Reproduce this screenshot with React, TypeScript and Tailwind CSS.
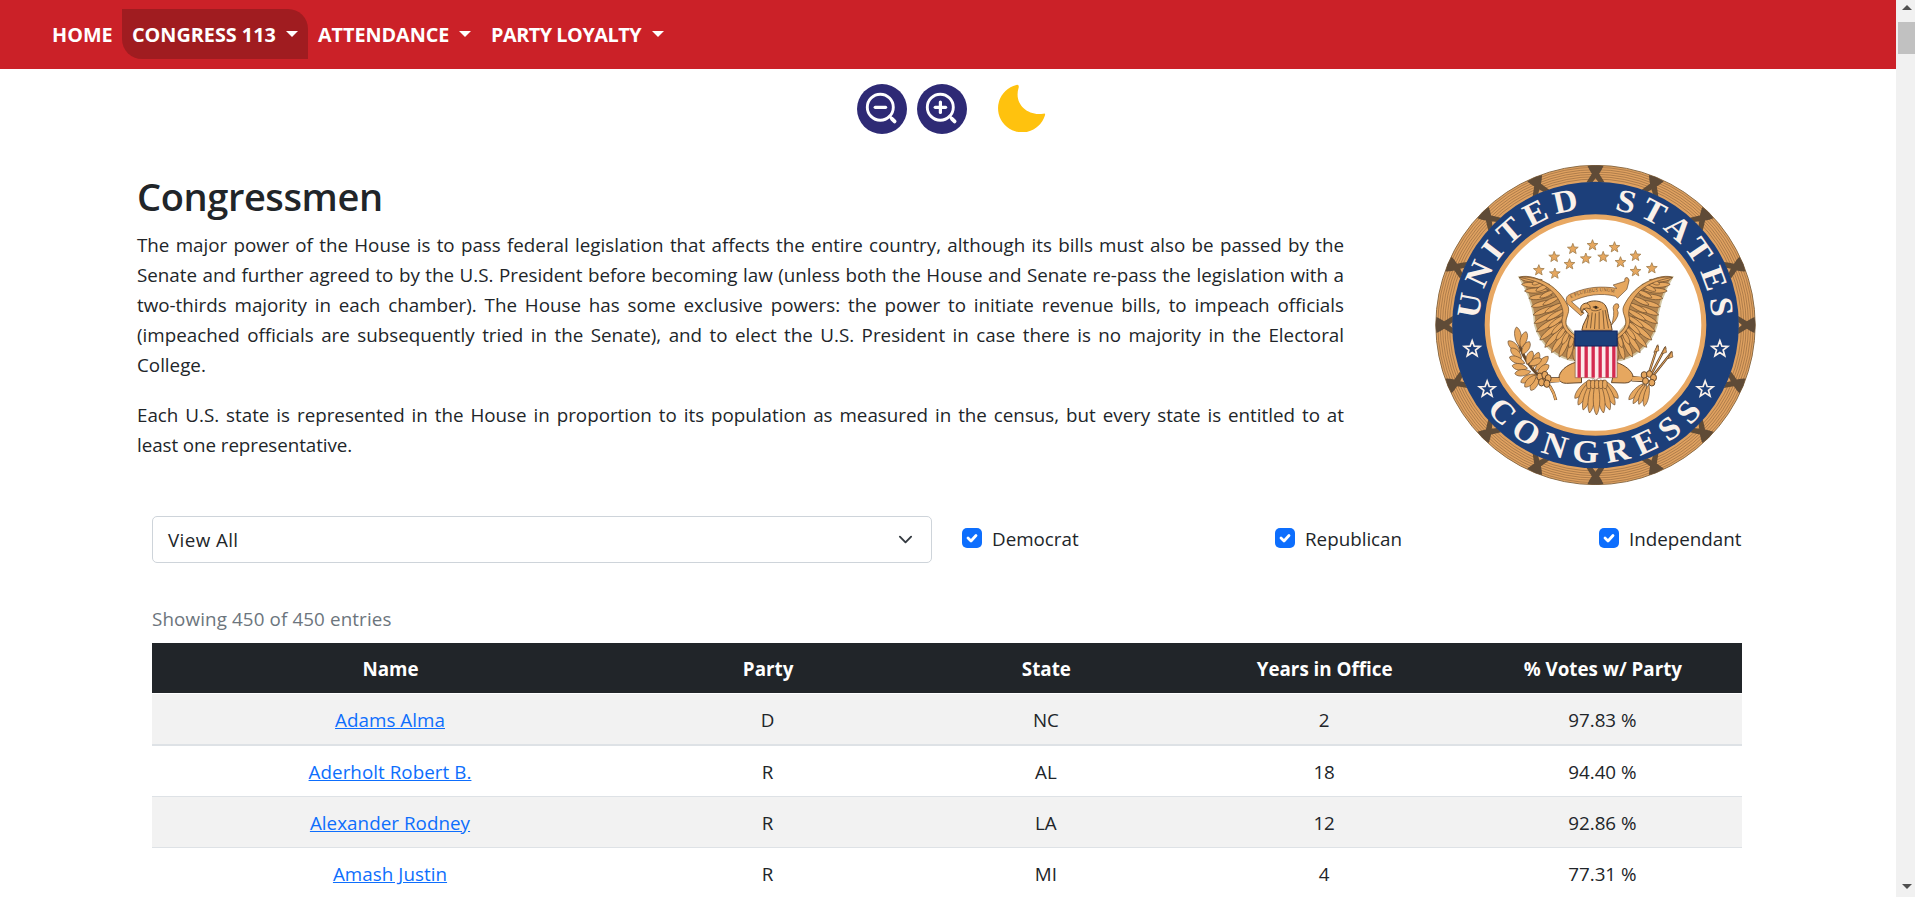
import React from 'react';

type Point = [number, number];

const GOLD = '#e6a75f';
const BROWN = '#66492c';

function leafPath([x1, y1]: Point, [x2, y2]: Point, width: number): string {
  const dx = x2 - x1;
  const dy = y2 - y1;
  const len = Math.hypot(dx, dy) || 1;
  const nx = (-dy / len) * width;
  const ny = (dx / len) * width;
  const ax = x1 + dx * 0.3;
  const ay = y1 + dy * 0.3;
  const bx = x1 + dx * 0.85;
  const by = y1 + dy * 0.85;
  return `M${x1} ${y1}C${ax + nx} ${ay + ny} ${bx + nx} ${by + ny} ${x2} ${y2}C${bx - nx} ${by - ny} ${ax - nx} ${ay - ny} ${x1} ${y1}Z`;
}

function starPoints(cx: number, cy: number, r: number, inner = 0.4): string {
  return Array.from({ length: 10 }, (_, i) => {
    const a = (Math.PI / 5) * i - Math.PI / 2;
    const q = i % 2 ? r * inner : r;
    return `${cx + q * Math.cos(a)},${cy + q * Math.sin(a)}`;
  }).join(' ');
}

function Feather({ from, to, w }: { from: Point; to: Point; w: number }) {
  return <path d={leafPath(from, to, w)} fill={GOLD} stroke={BROWN} strokeWidth="2" strokeLinejoin="round" />;
}

const outerTips: Point[] = [[283, 368], [290, 388], [299, 408], [312, 430], [320, 455], [325, 480], [328, 505], [335, 530], [345, 555], [360, 577], [380, 593], [403, 606], [428, 614], [450, 618]];
const outerBases: Point[] = [[350, 378], [362, 392], [372, 405], [382, 420], [390, 436], [396, 452], [400, 468], [405, 485], [410, 500], [418, 515], [426, 527], [436, 538], [446, 548], [454, 556]];
const innerTips: Point[] = [[322, 388], [333, 408], [345, 428], [354, 450], [360, 473], [364, 496], [370, 518], [380, 538], [394, 555], [412, 568], [434, 578], [452, 584]];
const innerBases: Point[] = [[352, 374], [374, 388], [392, 405], [406, 424], [416, 443], [424, 460], [424, 478], [422, 496], [426, 512], [434, 526], [446, 538], [458, 546]];

function Wing() {
  return (
    <g>
      <path d="M283 366C345 362 400 395 428 455C435 470 418 490 424 510L455 545V618C400 612 345 570 330 510C328 455 310 410 283 366Z" fill="#b5864f" stroke="#d3c6a2" strokeWidth="5" />
      {outerTips.map((t, i) => <Feather key={i} from={outerBases[i]} to={t} w={10} />).reverse()}
      {innerTips.map((t, i) => <Feather key={i} from={innerBases[i]} to={t} w={9} />).reverse()}
      <path d="M283 367C345 360 404 398 430 455C437 474 418 490 424 510C430 528 445 536 455 545L450 552C425 535 408 515 412 490C420 470 408 440 390 418C365 388 330 376 283 367Z" fill={GOLD} stroke={BROWN} strokeWidth="2" />
    </g>
  );
}

const branchLeaves: [Point, Point][] = [
  [[285, 575], [275, 516]], [[288, 578], [304, 530]], [[285, 592], [250, 558]], [[292, 598], [314, 560]],
  [[290, 610], [258, 580]], [[300, 625], [254, 606]], [[306, 628], [322, 588]], [[308, 640], [262, 632]],
  [[322, 640], [342, 592]], [[318, 650], [270, 656]], [[330, 648], [370, 604]], [[332, 658], [288, 682]],
  [[338, 655], [372, 630]], [[342, 664], [318, 706]], [[334, 660], [300, 696]], [[312, 630], [350, 612]],
];

const tailTips: Point[] = [[450, 730], [580, 730], [460, 750], [570, 750], [475, 765], [555, 765], [494, 774], [536, 774], [515, 780]];
const goldStars: Point[] = [[503, 271], [444, 282], [569, 277], [388, 306], [434, 328], [483, 311], [535, 306], [587, 322], [632, 303], [342, 346], [390, 356], [632, 349], [681, 340]];
const outlineStars: Point[] = [[142, 580], [187, 701], [885, 580], [841, 701]];

function Seal() {
  return (
    <svg viewBox="31 30 962 960" className="h-[320px] w-[321px] shrink-0" aria-label="United States Congress">
      <defs>
        <path id="united" d="M161.9 510A350 350 0 0 1 862 510" />
        <path id="congress" d="M99 510A413 413 0 0 0 925 510" />
        <path id="motto" d="M438 430Q505 398 580 415" />
      </defs>
      <circle cx="512" cy="510" r="479" fill="#dfa160" stroke="#8b6b45" strokeWidth="3" />
      {[473, 466, 459, 452, 445, 438].map((r) => (
        <circle key={r} cx="512" cy="510" r={r} fill="none" stroke="#956940" strokeWidth="2" />
      ))}
      {Array.from({ length: 16 }, (_, i) => (
        <path
          key={i}
          transform={`rotate(${i * 22.5} 512 510)`}
          d="M488 33Q512 28 536 33Q530 46 523 56Q530 67 539 82H521L512 70L503 82H485Q494 67 501 56Q494 46 488 33Z"
          fill="#5f4b37"
        />
      ))}
      <circle cx="512" cy="510" r="430" fill="#1c3f7a" />
      <circle cx="512" cy="510" r="325" fill="#fff" stroke="#e8a863" strokeWidth="15" />
      <g fill="#faf1ea" fontFamily="'Liberation Serif', serif" fontWeight="700" fontSize="97" letterSpacing="17">
        <text><textPath href="#united" startOffset="17" textLength="502" lengthAdjust="spacingAndGlyphs">UNITED</textPath></text>
        <text><textPath href="#united" startOffset="606" textLength="489" lengthAdjust="spacingAndGlyphs">STATES</textPath></text>
        <text letterSpacing="24"><textPath href="#congress" startOffset="273" textLength="769" lengthAdjust="spacingAndGlyphs">CONGRESS</textPath></text>
      </g>
      {outlineStars.map(([x, y]) => (
        <polygon key={`${x}-${y}`} points={starPoints(x, y + 2, 25, 0.42)} fill="#1c3f7a" stroke="#faf1ea" strokeWidth="5" />
      ))}
      {goldStars.map(([x, y]) => (
        <polygon key={`${x}-${y}`} points={starPoints(x, y, 17, 0.43)} fill={GOLD} stroke="#a07c4b" strokeWidth="2.4" />
      ))}

      <Wing />
      <g transform="matrix(-1 0 0 1 1026 0)"><Wing /></g>

      <path d="M427 447C420 425 428 420 445 414C490 395 530 393 576 400L565 390L600 379Q598 366 608 368Q616 374 611 384L606 403L578 430L572 424C530 412 480 420 440 440L478 474L468 482L432 450Z" fill={GOLD} stroke={BROWN} strokeWidth="2" />
      <path d="M565 458Q568 443 580 447Q586 455 577 464Q588 480 560 510Q570 480 565 458Z" fill={GOLD} stroke={BROWN} strokeWidth="2" />
      <text fill={BROWN} fontFamily="'Liberation Serif', serif" fontSize="14"><textPath href="#motto" textLength="134">E PLURIBUS UNUM</textPath></text>

      <path d="M469 468C464 455 472 445 486 444C500 434 530 436 541 450C552 465 547 485 558 505L562 526H471C473 505 488 490 490 476Q480 460 475 462Q474 470 472 474Z" fill={GOLD} stroke={BROWN} strokeWidth="3" />
      <path d="M486 445Q498 450 496 462Q485 456 475 462M504 456Q514 450 521 458Q514 464 504 456M492 480L484 520M502 472L497 520M512 475L509 522M523 470L523 522M534 466L538 522M541 465L551 520M498 464Q512 472 530 462" fill="none" stroke={BROWN} strokeWidth="2.4" />
      <circle cx="513" cy="457" r="4" fill="#36291d" />

      <path d="M452 622C425 630 403 648 402 670Q405 685 425 685L470 683V622ZM574 622C600 630 623 648 625 666Q620 684 600 684L560 683Z" fill={GOLD} stroke={BROWN} strokeWidth="3" />
      <path d="M404 668L372 668M404 680L376 682M622 664L656 668M620 678L656 680" stroke={BROWN} strokeWidth="3" />
      <path d="M404 669H370V681H404ZM622 665H660V677H622Z" fill={GOLD} />

      <path d="M279 540Q285 610 350 670Q382 690 393 735" fill="none" stroke={BROWN} strokeWidth="9" />
      <path d="M350 670Q382 690 392 732" fill="none" stroke={GOLD} strokeWidth="6" strokeLinecap="round" />
      {branchLeaves.map(([a, b], i) => <Feather key={i} from={a} to={b} w={13} />)}
      {[[345, 665], [360, 660], [350, 682], [370, 670], [366, 686]].map(([x, y], i) => (
        <ellipse key={i} cx={x} cy={y} rx="9" ry="11" fill={GOLD} stroke={BROWN} strokeWidth="3" />
      ))}

      {[[699, 572], [722, 577], [741, 591]].map(([x, y], i) => (
        <g key={i}>
          <path d={`M${x} ${y}L${672 + i * 7} ${655 + i * 3}`} stroke={BROWN} strokeWidth="7" />
          <path d={`M${x} ${y}L${672 + i * 7} ${655 + i * 3}`} stroke={GOLD} strokeWidth="3" />
          <path d={`M${x} ${y - 3}L${x - 12} ${y + 20}L${x + 3} ${y + 15}Z`} fill={GOLD} stroke={BROWN} strokeWidth="2" />
        </g>
      ))}
      <Feather from={[655, 686]} to={[612, 734]} w={11} />
      <Feather from={[660, 686]} to={[625, 746]} w={10} />
      <Feather from={[665, 688]} to={[642, 748]} w={10} />
      <Feather from={[672, 688]} to={[658, 754]} w={10} />
      {[[658, 660], [674, 657], [686, 668], [662, 678], [681, 683]].map(([x, y], i) => (
        <ellipse key={i} cx={x} cy={y} rx="9" ry="10" fill={GOLD} stroke={BROWN} strokeWidth="3" />
      ))}

      {tailTips.map((t, i) => <Feather key={i} from={[515 + (t[0] - 515) * 0.3, 675]} to={t} w={13} />)}
      {[492, 504, 516, 528, 540].map((x) => (
        <ellipse key={x} cx={x} cy="688" rx="7" ry="13" fill={GOLD} stroke={BROWN} strokeWidth="2" />
      ))}

      <path d="M451 572H577V668H532Q518 668 513 676Q508 668 494 668H451Z" fill="#fbe9ea" stroke="#7d5a3a" strokeWidth="2" />
      {[458, 479, 500, 521, 542, 562].map((x) => (
        <rect key={x} x={x} y="573" width="10" height="95" fill="#d42a50" />
      ))}
      <rect x="450" y="528" width="127" height="45" fill="#1c3f7a" stroke="#13235a" strokeWidth="3" />
    </svg>
  );
}

function ZoomIcon({ plus = false }: { plus?: boolean }) {
  return (
    <svg viewBox="0 0 50 50" className="size-[50px]">
      <circle cx="25" cy="25" r="25" fill="#2e2a75" />
      <g fill="none" stroke="#fff" strokeLinecap="round">
        <circle cx="23.3" cy="23.2" r="13" strokeWidth="2.9" />
        <path d="M32.7 32.5L34.5 34.3" strokeWidth="2.8" />
        <path d="M35 34.8L37.6 37.4" strokeWidth="3.8" />
        <path d="M18.2 23.3H28.6" strokeWidth="3.2" />
        {plus && <path d="M23.4 18.1V28.5" strokeWidth="3.2" />}
      </g>
    </svg>
  );
}

function Caret() {
  return <span className="h-0 w-0 border-x-[6px] border-t-[6px] border-x-transparent border-t-white" />;
}

function NavItem({ label, width, active = false, caret = true }: { label: string; width: string; active?: boolean; caret?: boolean }) {
  return (
    <a className={`flex h-[50px] items-center justify-between px-[10px] ${width} ${active ? 'rounded-tr-[20px] rounded-bl-[20px] bg-[#a01c20]' : ''}`}>
      <span className="pt-px whitespace-nowrap">{label}</span>
      {caret && <Caret />}
    </a>
  );
}

function Check({ label, width }: { label: string; width: string }) {
  return (
    <label className={`flex items-center gap-[10px] ${width}`}>
      <svg viewBox="0 0 20 20" className="size-5 shrink-0">
        <rect width="20" height="20" rx="5" fill="#0d6efd" />
        <path d="M6 10L9 13L14 7.5" fill="none" stroke="#fff" strokeWidth="2.8" strokeLinecap="round" strokeLinejoin="round" />
      </svg>
      <span className="pt-px whitespace-nowrap">{label}</span>
    </label>
  );
}

const intro = [
  'The major power of the House is to pass federal legislation that affects the entire country, although its bills must also be passed by the',
  'Senate and further agreed to by the U.S. President before becoming law (unless both the House and Senate re-pass the legislation with a',
  'two-thirds majority in each chamber). The House has some exclusive powers: the power to initiate revenue bills, to impeach officials',
  '(impeached officials are subsequently tried in the Senate), and to elect the U.S. President in case there is no majority in the Electoral',
];

const rows = [
  ['Adams Alma', 'D', 'NC', '2', '97.83 %'],
  ['Aderholt Robert B.', 'R', 'AL', '18', '94.40 %'],
  ['Alexander Rodney', 'R', 'LA', '12', '92.86 %'],
  ['Amash Justin', 'R', 'MI', '4', '77.31 %'],
];

const rowStyles = [
  'h-[53px] border-t border-b-2 border-t-white border-b-[#dee2e6] bg-[#f2f2f2]',
  'h-[51px] border-b border-[#dee2e6] bg-white',
  'h-[51px] border-b border-[#dee2e6] bg-[#f2f2f2]',
  'h-[51px] border-b border-[#dee2e6] bg-white',
];

const columns = 'grid grid-cols-[477px_repeat(4,1fr)] items-center text-center';

export default function App() {
  return (
    <div className="flex h-[897px] w-full overflow-hidden bg-white font-['Open_Sans','Noto_Sans',sans-serif] text-[18.8px] leading-[30px] text-[#212529]">
      <div className="flex min-w-0 flex-1 flex-col">
        <nav className="flex h-[69px] shrink-0 bg-[#cb2128] pt-[9px] pl-[42px] text-[19.8px] font-bold text-white">
          <NavItem label="HOME" width="w-[80px]" caret={false} />
          <NavItem label="CONGRESS 113" width="w-[186px]" active />
          <NavItem label="ATTENDANCE" width="w-[173px] tracking-[-0.05px]" />
          <NavItem label="PARTY LOYALTY" width="w-[193px] tracking-[-0.45px]" />
        </nav>

        <div className="flex shrink-0 gap-[10px] pt-[15px] pl-[857px]">
          <ZoomIcon />
          <ZoomIcon plus />
          <svg viewBox="0 0 48 48" className="ml-[21px] size-12">
            <path d="M18.3 1A24 24 0 1 0 47 31.3Q47.6 29 45.3 29.7C31 32.3 19 22 19.6 10Q19.7 6.5 20.8 3Q21 .3 18.3 1Z" fill="#ffc20e" />
          </svg>
        </div>

        <section className="flex shrink-0 justify-between pt-[31px] pr-[140px] pl-[137px]">
          <div className="w-[1207px] pt-[7px]">
            <h1 className="mb-[10px] text-[38px] leading-[48px] font-semibold tracking-[-0.4px]">Congressmen</h1>
            <p className="mb-5">
              {intro.map((line) => (
                <span key={line} className="block whitespace-nowrap [text-align-last:justify]">{line}</span>
              ))}
              <span className="block">College.</span>
            </p>
            <p>
              <span className="block whitespace-nowrap [text-align-last:justify]">
                Each U.S. state is represented in the House in proportion to its population as measured in the census, but every state is entitled to at
              </span>
              <span className="block tracking-[-0.07px]">least one representative.</span>
            </p>
          </div>
          <Seal />
        </section>

        <section className="flex shrink-0 pt-[31px] pl-[152px]">
          <div className="flex h-[47px] w-[780px] items-center justify-between rounded-[5px] border border-[#ced4da] pr-[18px] pl-[15px]">
            <span className="tracking-[0.4px]">View All</span>
            <svg viewBox="0 0 16 16" className="size-[15px]">
              <path d="M2 5l6 6 6-6" fill="none" stroke="#343a40" strokeWidth="2" strokeLinecap="round" strokeLinejoin="round" />
            </svg>
          </div>
          <div className="ml-[30px] flex h-[44px] w-[780px] justify-between">
            <Check label="Democrat" width="w-[116px]" />
            <Check label="Republican" width="w-[127px]" />
            <Check label="Independant" width="w-[143px]" />
          </div>
        </section>

        <section className="w-[1742px] shrink-0 pt-[41px] pl-[152px]">
          <p className="mb-[9px] tracking-[0.12px] text-[#6c757d]">Showing 450 of 450 entries</p>
          <div className={`h-[50px] bg-[#212529] font-bold text-white ${columns}`}>
            {['Name', 'Party', 'State', 'Years in Office', '% Votes w/ Party'].map((h) => <span key={h} className="pt-px">{h}</span>)}
          </div>
          {rows.map((row, r) => (
            <div key={row[0]} className={`${columns} ${rowStyles[r]}`}>
              {row.map((cell, i) => (
                <span key={i} className={i === 0 ? 'pt-[2px] pr-px tracking-[0.05px] text-[#0d6efd] underline' : 'pt-[2px] pr-px'}>{cell}</span>
              ))}
            </div>
          ))}
        </section>
      </div>

      <aside className="flex w-[19px] shrink-0 flex-col items-center bg-[#f1f1f1] pt-[5px] pb-[8px] pl-[2px]">
        <span className="border-x-[5px] border-b-[5px] border-x-transparent border-b-[#505050]" />
        <span className="mt-[12px] h-[32px] w-[17px] bg-[#c1c1c1]" />
        <span className="mt-auto border-x-[5px] border-t-[5px] border-x-transparent border-t-[#505050]" />
      </aside>
    </div>
  );
}
